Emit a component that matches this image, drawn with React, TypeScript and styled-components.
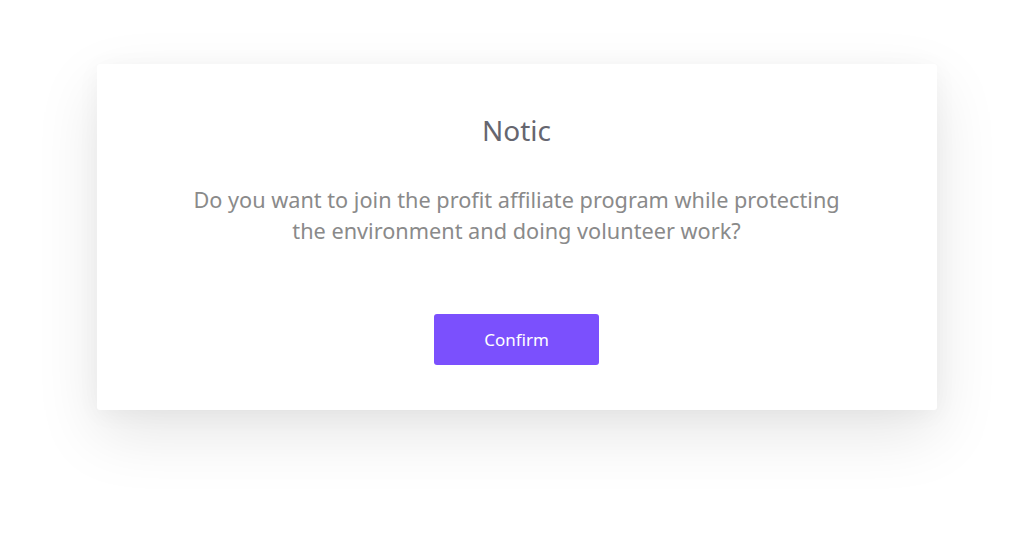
import styled, { createGlobalStyle } from 'styled-components';

const GlobalStyle = createGlobalStyle`
  html, body {
    margin: 0;
    padding: 0;
    background: #ffffff;
  }
  body {
    font-family: 'Noto Sans', 'Open Sans', sans-serif;
  }
`;

function App() {
  return (
    <>
      <GlobalStyle />
      <StyledPage>
        <StyledDialog>
          <StyledTitle>Notic</StyledTitle>
          <StyledMessage>
            Do you want to join the profit affiliate program while protecting
            <br />
            the environment and doing volunteer work?
          </StyledMessage>
          <StyledButton type="button">Confirm</StyledButton>
        </StyledDialog>
      </StyledPage>
    </>
  );
}

export default App;

const StyledPage = styled('div')({
  width: '100%',
  height: '539px',
  paddingTop: '64px',
  boxSizing: 'border-box',
});

const StyledDialog = styled('div')({
  width: '840px',
  height: '346px',
  margin: '0 auto',
  boxSizing: 'border-box',
  paddingTop: '49px',
  display: 'flex',
  flexDirection: 'column',
  alignItems: 'center',
  background: '#ffffff',
  borderRadius: '3px',
  boxShadow: '0 24px 64px rgba(0, 0, 0, 0.10), 0 4px 24px rgba(0, 0, 0, 0.04)',
});

const StyledTitle = styled('h2')({
  margin: 0,
  fontSize: '28px',
  lineHeight: '34px',
  fontWeight: 400,
  color: '#66666f',
});

const StyledMessage = styled('p')({
  margin: '37px 0 0',
  fontSize: '21.7px',
  lineHeight: '31px',
  color: '#8a8a8a',
  textAlign: 'center',
});

const StyledButton = styled('button')({
  marginTop: '68px',
  width: '165px',
  height: '51px',
  border: 'none',
  borderRadius: '3px',
  background: '#7b50fd',
  color: '#ffffff',
  fontFamily: 'inherit',
  fontSize: '17px',
  cursor: 'pointer',
});
